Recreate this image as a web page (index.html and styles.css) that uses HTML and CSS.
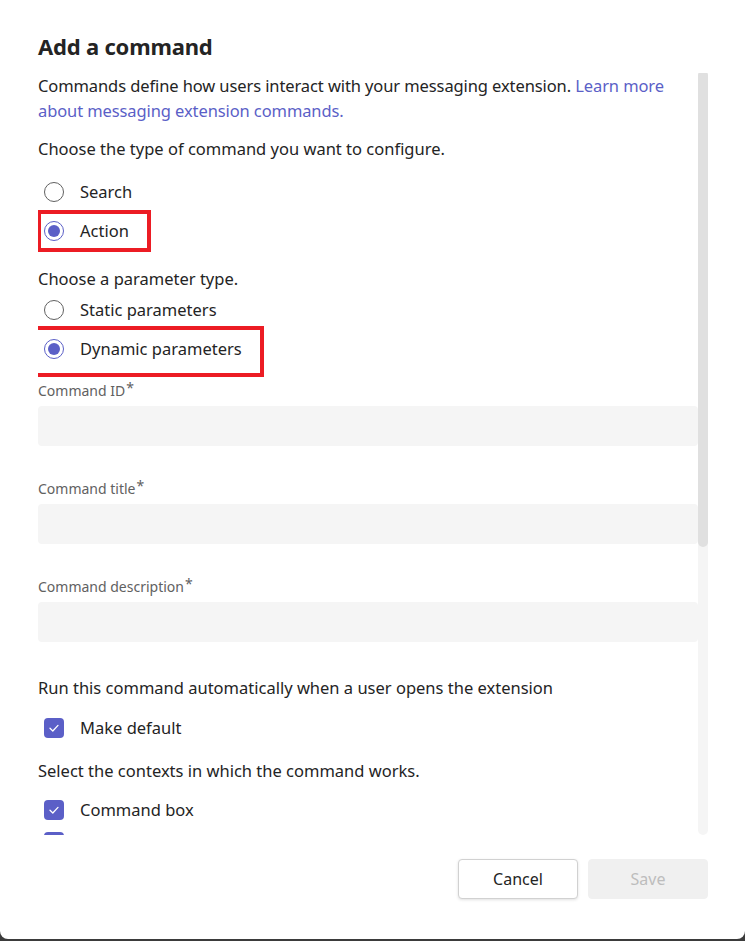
FILE: index.html
```html
<!DOCTYPE html>
<html lang="en">
<head>
<meta charset="utf-8">
<title>Add a command</title>
<link rel="stylesheet" href="styles.css">
</head>
<body>
<div class="dialog">
  <h1 class="title">Add a command</h1>
  <div class="scroll">
    <div class="content">
      <p class="intro">Commands define how users interact with your messaging extension. <a href="#" class="link">Learn more about messaging extension commands.</a></p>
      <p class="text q1">Choose the type of command you want to configure.</p>
      <div class="choice"><span class="radio"></span><span>Search</span></div>
      <div class="choice"><span class="radio on"></span><span>Action</span><span class="mark mark-action"></span></div>
      <p class="text q2">Choose a parameter type.</p>
      <div class="choice"><span class="radio"></span><span>Static parameters</span></div>
      <div class="choice"><span class="radio on"></span><span>Dynamic parameters</span><span class="mark mark-dynamic"></span></div>
      <div class="field first">
        <label class="label">Command ID<span class="req">*</span></label>
        <div class="input"></div>
      </div>
      <div class="field">
        <label class="label">Command title<span class="req">*</span></label>
        <div class="input"></div>
      </div>
      <div class="field">
        <label class="label">Command description<span class="req">*</span></label>
        <div class="input"></div>
      </div>
      <p class="text q3">Run this command automatically when a user opens the extension</p>
      <div class="check-row"><span class="check"><svg viewBox="0 0 20 20" width="20" height="20"><path d="M6 10.3 L8.8 13 L14 7.4" fill="none" stroke="#fff" stroke-width="1.3" stroke-linecap="round" stroke-linejoin="round"/></svg></span><span>Make default</span></div>
      <p class="text q4">Select the contexts in which the command works.</p>
      <div class="check-row"><span class="check"><svg viewBox="0 0 20 20" width="20" height="20"><path d="M6 10.3 L8.8 13 L14 7.4" fill="none" stroke="#fff" stroke-width="1.3" stroke-linecap="round" stroke-linejoin="round"/></svg></span><span>Command box</span></div>
      <div class="check-row last"><span class="check"><svg viewBox="0 0 20 20" width="20" height="20"><path d="M6 10.3 L8.8 13 L14 7.4" fill="none" stroke="#fff" stroke-width="1.3" stroke-linecap="round" stroke-linejoin="round"/></svg></span><span>Compose box</span></div>
    </div>
    <div class="scrollbar"><div class="thumb"></div></div>
  </div>
  <div class="footer">
    <button class="btn cancel">Cancel</button>
    <button class="btn save" disabled>Save</button>
  </div>
</div>
</body>
</html>
```
FILE: styles.css
```css
html, body {
  margin: 0;
  padding: 0;
}
body {
  background: #3b3b3b;
  font-family: "Noto Sans", "Open Sans", sans-serif;
  color: #242424;
  width: 745px;
  height: 941px;
  overflow: hidden;
}
.dialog {
  background: #ffffff;
  height: 939px;
  border-radius: 0 0 8px 8px;
  box-sizing: border-box;
  padding: 32px 37px 0 38px;
  display: flex;
  flex-direction: column;
}
.title {
  margin: 0;
  font-size: 22px;
  line-height: 28px;
  font-weight: 700;
  letter-spacing: -0.2px;
  flex: none;
}
.scroll {
  margin-top: 12.5px;
  height: 762.5px;
  display: flex;
  overflow: hidden;
  flex: none;
}
.content {
  width: 660px;
  flex: none;
  overflow: hidden;
  display: flex;
  flex-direction: column;
  font-size: 16.5px;
}
.content > * {
  flex: none;
}
.intro, .text {
  margin: 0;
  line-height: 25px;
}
.intro {
  letter-spacing: -0.1px;
}
.link {
  color: #5b5fc7;
  text-decoration: none;
}
.q1 { margin-top: 13px; margin-bottom: 12px; }
.q2 { margin-top: 15px; }
.q3 { margin-top: 32.5px; }
.q4 { margin-top: 13.5px; }
.choice {
  position: relative;
  height: 39px;
  display: flex;
  align-items: center;
  line-height: 20px;
}
.radio {
  width: 20px;
  height: 20px;
  box-sizing: border-box;
  border: 1px solid #616161;
  border-radius: 50%;
  margin: 0 16px 0 6px;
  display: flex;
  align-items: center;
  justify-content: center;
  flex: none;
}
.radio.on {
  border-color: #5b5fc7;
}
.radio.on::after {
  content: "";
  width: 12px;
  height: 12px;
  border-radius: 50%;
  background: #5b5fc7;
}
.mark {
  position: absolute;
  border: 4px solid #ec1c24;
  box-sizing: border-box;
}
.mark-action {
  left: -1px;
  top: -1.5px;
  width: 114px;
  height: 42px;
}
.mark-dynamic {
  left: -4px;
  top: -3.5px;
  width: 230px;
  height: 51px;
}
.field {
  display: flex;
  flex-direction: column;
  margin-top: 33px;
}
.field.first {
  margin-top: 12.5px;
}
.label {
  font-size: 14px;
  line-height: 20px;
  color: #616161;
}
.req {
  position: relative;
  top: -3px;
  margin-left: 1px;
}
.input {
  margin-top: 5px;
  height: 40px;
  background: #f5f5f5;
  border-radius: 4px;
}
.check-row {
  height: 32px;
  display: flex;
  align-items: center;
  line-height: 20px;
}
.check-row.last {
  align-items: flex-start;
  padding-top: 6px;
  box-sizing: border-box;
}
.check-row.last span:last-child {
  padding-top: 6px;
}
.q3 + .check-row { margin-top: 12.5px; }
.q4 + .check-row { margin-top: 11.5px; }
.check {
  width: 20px;
  height: 20px;
  border-radius: 4px;
  background: #5b5fc7;
  margin: 0 16px 0 6px;
  flex: none;
  display: flex;
}
.scrollbar {
  width: 10px;
  margin-top: -3px;
  height: 765px;
  background: #f5f5f5;
  border-radius: 5px;
  flex: none;
  overflow: hidden;
}
.thumb {
  height: 477px;
  background: #e0e0e0;
  border-radius: 5px;
}
.footer {
  margin-top: 24px;
  display: flex;
  justify-content: flex-end;
  gap: 10px;
  flex: none;
}
.btn {
  width: 120px;
  height: 40px;
  border-radius: 4px;
  font-family: inherit;
  font-size: 16px;
  padding: 0;
}
.cancel {
  background: #ffffff;
  border: 1px solid #d1d1d1;
  color: #242424;
  box-shadow: 0 1px 3px rgba(0,0,0,0.12);
}
.save {
  background: #f0f0f0;
  border: 1px solid #f0f0f0;
  color: #bdbdbd;
}
```
